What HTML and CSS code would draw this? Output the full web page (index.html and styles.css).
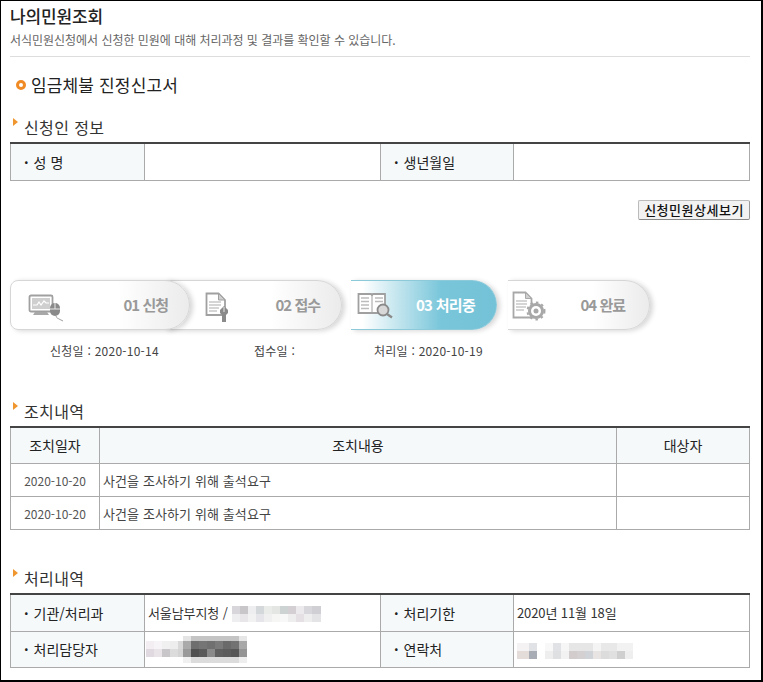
FILE: index.html
```html
<!DOCTYPE html>
<html lang="ko">
<head>
    <meta charset="UTF-8">
    <meta name="viewport" content="width=device-width, initial-scale=1.0">
    <title>나의민원조회</title>
    <link rel="stylesheet" href="styles.css">
</head>
<body>
<div class="frame">

    <div class="page-head">
        <h1>나의민원조회</h1>
        <p>서식민원신청에서 신청한 민원에 대해 처리과정 및 결과를 확인할 수 있습니다.</p>
    </div>

    <h2 class="doc-title"><span class="ring"></span>임금체불 진정신고서</h2>

    <!-- 신청인 정보 -->
    <h3 class="sec-title first">신청인 정보</h3>
    <table class="info">
        <colgroup><col class="c1"><col class="c2"><col class="c3"><col></colgroup>
        <tr>
            <th>성 명</th>
            <td></td>
            <th>생년월일</th>
            <td></td>
        </tr>
    </table>

    <div class="btn-row"><button class="detail-btn">신청민원상세보기</button></div>

    <!-- 진행단계 -->
    <div class="steps">
        <div class="step s1">
            <svg class="ico" width="36" height="36" viewBox="0 0 36 36">
                <rect x="1.5" y="8.5" width="23" height="16" rx="1.5" fill="#fff" stroke="#a0a0a0" stroke-width="1.8"/>
                <rect x="4" y="11" width="18" height="11" fill="#cfcfcf"/>
                <path d="M5 18h4l2-3 2 3 3-4 2 2h3" fill="none" stroke="#fff" stroke-width="1.2"/>
                <path d="M7 25h12l2 3H5z" fill="#a8a8a8"/>
                <path d="M22 21a5 5 0 0 1 10 0v3a5 5 0 0 1-10 0z" fill="#8a8a8a"/>
                <path d="M22 22h10M27 16v6" stroke="#e8e8e8"/>
                <path d="M28 29c1 3 2 2 3 3s3 1 4 2" fill="none" stroke="#a0a0a0"/>
            </svg>
            <span class="step-label">01 신청</span>
        </div>
        <div class="step s2">
            <svg class="ico" width="36" height="36" viewBox="0 0 36 36">
                <path d="M1.5 6.5h12l6.5 6.5v15H1.500z" fill="#fff" stroke="#a0a0a0" stroke-width="1.8"/>
                <path d="M13.500 6.500v6.500H20z" fill="#cfcfcf" stroke="#a0a0a0"/>
                <path d="M4 15h12M4 18h12M4 21h10M4 24h8" stroke="#c8c8c8" stroke-width="1.4"/>
                <path d="M19 19l4 4v3l-2 2v7h-4v-7l-2-2v-3z" fill="#8a8a8a"/>
                <path d="M19 20v5" stroke="#e8e8e8"/>
            </svg>
            <span class="step-label">02 접수</span>
        </div>
        <div class="step s3">
            <svg class="ico" width="36" height="36" viewBox="0 0 36 36">
                <path d="M1.500 7h12.500l1 1 1-1h12v19H1.500z" fill="#fff" stroke="#a0a0a0" stroke-width="1.800"/>
                <path d="M15 8v18" stroke="#a0a0a0"/>
                <path d="M4 11h8M4 14.500h8M4 18h8M4 21.500h8M18 11h8M18 14.500h8" stroke="#bcbcbc" stroke-width="1.600"/>
                <circle cx="26" cy="23" r="5.500" fill="#d8d8d8" stroke="#8a8a8a" stroke-width="1.800"/>
                <path d="M30 27l5 3.500" stroke="#8a8a8a" stroke-width="2.400"/>
            </svg>
            <span class="step-label">03 처리중</span>
        </div>
        <div class="step s4">
            <svg class="ico" width="36" height="36" viewBox="0 0 36 36">
                <path d="M1.500 5.500h12l6 6v19H1.500z" fill="#fff" stroke="#a8a8a8" stroke-width="1.800"/>
                <path d="M13.500 5.500v6h6z" fill="#cfcfcf" stroke="#a8a8a8"/>
                <path d="M4 14h11M4 17h11M4 20h10M4 23h8" stroke="#c8c8c8" stroke-width="1.400"/>
                <circle cx="24" cy="24" r="8" fill="#a8a8a8"/>
                <circle cx="24" cy="24" r="8.500" fill="none" stroke="#a8a8a8" stroke-width="2" stroke-dasharray="2.500 3.170"/>
                <circle cx="24" cy="24" r="5" fill="#fff"/>
                <circle cx="24" cy="24" r="2.500" fill="#a8a8a8"/>
            </svg>
            <span class="step-label">04 완료</span>
        </div>
    </div>

    <div class="step-dates">
        <span>신청일 : 2020-10-14</span>
        <span>접수일 :</span>
        <span>처리일 : 2020-10-19</span>
    </div>

    <!-- 조치내역 -->
    <h3 class="sec-title action">조치내역</h3>
    <table class="list">
        <colgroup><col class="l1"><col><col class="l3"></colgroup>
        <tr>
            <th>조치일자</th>
            <th>조치내용</th>
            <th>대상자</th>
        </tr>
        <tr>
            <td class="date">2020-10-20</td>
            <td>사건을 조사하기 위해 출석요구</td>
            <td></td>
        </tr>
        <tr>
            <td class="date">2020-10-20</td>
            <td>사건을 조사하기 위해 출석요구</td>
            <td></td>
        </tr>
    </table>

    <!-- 처리내역 -->
    <h3 class="sec-title result">처리내역</h3>
    <table class="info">
        <colgroup><col class="c1"><col class="c2"><col class="c3"><col></colgroup>
        <tr>
            <th>기관/처리과</th>
            <td class="val">서울남부지청 /<span class="blur b1"></span></td>
            <th>처리기한</th>
            <td class="val">2020년 11월 18일</td>
        </tr>
        <tr class="row2">
            <th>처리담당자</th>
            <td class="val"><span class="blur b2"></span></td>
            <th>연락처</th>
            <td class="val"><span class="blur b4"></span></td>
        </tr>
    </table>

</div>
</body>
</html>
```
FILE: styles.css
```css
* {
    box-sizing: border-box;
}

html, body {
    margin: 0;
    padding: 0;
    background-color: #fff;
}

body {
    font-family: "Noto Sans CJK KR", "Noto Sans", sans-serif;
    color: #333;
}

.frame {
    width: 763px;
    height: 682px;
    padding: 0 0 0 9px;
    border: 1px solid #000;
    border-width: 1px 2px 2px 1px;
    overflow: hidden;
}

.page-head {
    width: 740px;
    height: 56px;
    border-bottom: 1px solid #ddd;
}

.page-head h1 {
    margin: 0;
    padding-top: 3px;
    font-size: 17px;
    line-height: 24px;
    font-weight: 500;
    letter-spacing: -0.15px;
    color: #222;
}

.page-head p {
    margin: 4px 0 0;
    font-size: 12px;
    line-height: 16px;
    letter-spacing: -0.03px;
    color: #666;
}

.doc-title {
    display: flex;
    align-items: center;
    margin: 16px 0 0 6px;
    font-size: 17px;
    line-height: 24px;
    font-weight: 400;
    letter-spacing: 0.15px;
    color: #222;
}

.ring {
    width: 10px;
    height: 10px;
    margin-right: 5px;
    border: 3px solid #f08a24;
    border-radius: 50%;
}

.sec-title {
    position: relative;
    margin: 0;
    padding-left: 14px;
    font-size: 16px;
    line-height: 22px;
    font-weight: 400;
    letter-spacing: 0.4px;
    color: #333;
}

.sec-title::before {
    content: "";
    position: absolute;
    left: 3px;
    top: 2px;
    border-left: 5px solid #f0962e;
    border-top: 4px solid transparent;
    border-bottom: 4px solid transparent;
}

.sec-title.first {
    margin-top: 19px;
    margin-bottom: 4px;
}

.sec-title.action {
    margin-top: 41px;
    margin-bottom: 4px;
}

.sec-title.result {
    margin-top: 37px;
    margin-bottom: 4px;
}

table {
    width: 740px;
    border-collapse: collapse;
    table-layout: fixed;
    border-top: 2px solid #444;
}

th, td {
    border: 1px solid #aaa;
    padding: 0;
}

tr:first-child th, tr:first-child td {
    border-top: 0;
}

.info th {
    height: 37px;
    padding-left: 13px;
    background-color: #f5f9fa;
    text-align: left;
    font-size: 14px;
    font-weight: 400;
    color: #222;
}

.info th::before {
    content: "·";
    margin-right: 5px;
    font-weight: 700;
}

.info .row2 th {
    height: 36px;
}

.info .c1 {
    width: 134px;
}

.info .c2 {
    width: 236px;
}

.info .c3 {
    width: 133px;
}

.val {
    padding-left: 3px;
    font-size: 13px;
    letter-spacing: -0.1px;
    color: #333;
}

/* mosaic patches over private data */
.blur {
    display: inline-block;
    vertical-align: middle;
    background-repeat: no-repeat;
}

.b1 {
    width: 93px;
    height: 16px;
    background-image:
        linear-gradient(90deg, #fff 0 4px, #d8d6da 4px 12px, #c9c6ca 12px 20px, #eeeef0 20px 28px, #d5d8da 28px 36px, #eaecea 36px 44px, #e4e6e4 44px 52px, #cdd2d2 52px 60px, #d4cfd2 60px 68px, #eceaec 68px 76px, #d8d8dc 76px 84px, #d0d0d4 84px 93px),
        linear-gradient(90deg, #fff 0 4px, #eeeef0 4px 12px, #e8e6e8 12px 20px, #f2f2f2 20px 28px, #e6e6ea 28px 36px, #f0f0f0 36px 44px, #f6f6f4 44px 52px, #f8f8f8 52px 60px, #eee 60px 68px, #e4e0e4 68px 76px, #eee 76px 84px, #e4e4e6 84px 93px);
    background-size: 100% 8px;
    background-position: 0 0, 0 8px;
}

.b2 {
    width: 101px;
    height: 27px;
    margin-left: -2px;
    background-image:
        linear-gradient(90deg, #fff 0 37px, #e4e4e4 37px 45px, #c4c4c4 45px 93px, #e6e6e6 93px 101px),
        linear-gradient(90deg, #f2eef2 0 8px, #f6f4f6 8px 16px, #f0f0f0 16px 24px, #ededed 24px 32px, #d8d8d8 32px 37px, #aaa 37px 45px, #6e6e6e 45px 53px, #757575 53px 61px, #707070 61px 69px, #7a7a7a 69px 77px, #6a6a6a 77px 85px, #727272 85px 93px, #a8a8a8 93px 101px),
        linear-gradient(90deg, #e0dae0 0 8px, #e8e4e8 8px 16px, #c8c6c8 16px 24px, #dcdcdc 24px 32px, #d4d4d4 32px 37px, #999 37px 45px, #505050 45px 53px, #5a5a5a 53px 61px, #8a8a8a 61px 69px, #606060 69px 77px, #5c5c5c 77px 85px, #565656 85px 93px, #949494 93px 101px),
        linear-gradient(90deg, #fff 0 37px, #f0f0f0 37px 45px, #dcdcdc 45px 93px, #eee 93px 101px);
    background-size: 100% 5px, 100% 8px, 100% 8px, 100% 6px;
    background-position: 0 0, 0 5px, 0 13px, 0 21px;
}

.b4 {
    width: 116px;
    height: 16px;
    background-image:
        linear-gradient(90deg, #f4f2f2 0 12px, #e0e2e6 12px 20px, #fff 20px 28px, #f8f8f8 28px 36px, #e0e2e6 36px 44px, #f6f6f6 44px 52px, #e6e6e6 52px 76px, #f4f4f4 76px 84px, #e8e8e8 84px 100px, #f2f2f2 100px 116px),
        linear-gradient(90deg, #e4dcd8 0 12px, #a8acb4 12px 20px, #fff 20px 28px, #eee 28px 36px, #dfe0e2 36px 44px, #f2f2f2 44px 52px, #d2cccc 52px 60px, #d4cfd0 60px 68px, #d0d4d8 68px 76px, #e8e4e4 76px 84px, #dcdcdc 84px 92px, #e0e0e0 92px 100px, #cfcfcf 100px 108px, #eee 108px 116px);
    background-size: 100% 8px;
    background-position: 0 0, 0 8px;
}

.btn-row {
    display: flex;
    justify-content: flex-end;
    width: 740px;
    padding: 19px 0 0;
}

.detail-btn {
    height: 20px;
    width: 112px;
    padding: 0;
    background-color: #f2f2f2;
    border: 1px solid #bbb;
    border-right-color: #999;
    border-bottom-color: #888;
    border-radius: 2px;
    font-family: inherit;
    font-size: 13px;
    font-weight: 500;
    letter-spacing: 0.5px;
    line-height: 15px;
    color: #111;
}

.steps {
    display: flex;
    margin-top: 60px;
    height: 50px;
}

.step {
    position: relative;
    display: flex;
    align-items: center;
    justify-content: space-between;
    height: 50px;
    padding-right: 21px;
    background: linear-gradient(90deg, #fff 60%, #ebebeb);
    border: 1px solid #d6d6d6;
    border-left: 0;
    border-radius: 0 25px 25px 0;
    box-shadow: 3px 1px 5px rgba(0, 0, 0, 0.16);
}

.s1 {
    z-index: 4;
    width: 180px;
    padding-left: 17px;
    border-left: 1px solid #d6d6d6;
    border-radius: 8px 25px 25px 8px;
}

.s2 {
    z-index: 3;
    width: 177px;
    margin-left: -25px;
    padding-left: 40px;
}

.s3 {
    z-index: 5;
    width: 146px;
    margin-left: 9px;
    padding-left: 6px;
    background: linear-gradient(90deg, #fff 0, #fff 8%, #79c6da 62%, #74c2d7);
    border-color: #8cc9d9;
}

.s4 {
    z-index: 4;
    width: 142px;
    margin-left: 11px;
    padding-left: 4px;
    padding-right: 24px;
}

.ico {
    flex: none;
}

.step-label {
    font-size: 15px;
    font-weight: 700;
    letter-spacing: -1px;
    color: #999;
}

.s3 .step-label {
    color: #fff;
    letter-spacing: -0.7px;
}

.step-dates {
    display: flex;
    margin-top: 13px;
    padding-left: 40px;
    font-size: 12px;
    line-height: 16px;
    letter-spacing: 0.25px;
    color: #444;
}

.step-dates span:nth-child(1) {
    width: 204px;
}

.step-dates span:nth-child(2) {
    width: 120px;
}

.list th {
    height: 37px;
    background-color: #f5f9fa;
    font-size: 14px;
    font-weight: 400;
    color: #222;
}

.list td {
    height: 33px;
    padding-left: 3px;
    font-size: 13px;
    letter-spacing: 0.1px;
    color: #444;
}

.list .date {
    padding-left: 0;
    font-size: 12px;
    letter-spacing: 0;
    text-align: center;
    color: #555;
}

.list .l1 {
    width: 89px;
}

.list .l3 {
    width: 133px;
}
```
